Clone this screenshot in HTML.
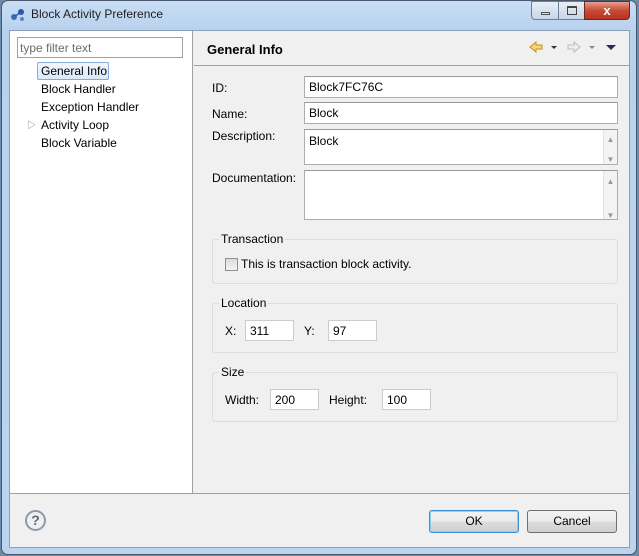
<!DOCTYPE html>
<html><head><meta charset="utf-8"><style>
*{margin:0;padding:0;box-sizing:border-box}
body{width:639px;height:556px;overflow:hidden;background:#6d8aa8;font-family:"Liberation Sans","Noto Sans CJK KR",sans-serif;font-size:12px;color:#000;position:relative}
.a{position:absolute}
#win{left:1px;top:0;width:636px;height:555px;border:1px solid #4a5a6e;border-radius:7px;background:linear-gradient(#c9def5,#b8d1ee 30px,#bcd4ef);}
#inner{left:9px;top:30px;width:621px;height:518px;background:#f0f0f0;border:1px solid #8aa0b8}
.txt{background:#fff;border:1px solid #abadb3;border-top-color:#999;padding:2px 4px;height:22px;line-height:16px}
.grp{border:1px solid #dcdcdc;border-radius:3px}
.lg{background:#f0f0f0;padding:0 2px}
.btn{border:1px solid #707070;border-radius:3px;background:linear-gradient(#f2f2f2,#ebebeb 50%,#dddddd 50%,#cfcfcf);text-align:center;line-height:20px}
.sb{width:14px;background:#f3f3f3;border-left:1px solid #e3e3e3;color:#999;font-size:8px;text-align:center}
</style></head><body>
<div id="win" class="a"></div>
<svg class="a" style="left:10px;top:7px" width="16" height="16"><circle cx="4" cy="10" r="3" fill="#3b6db0"/><circle cx="11" cy="5" r="3" fill="#2a5aa0"/><circle cx="12" cy="12" r="2" fill="#5a86c0"/><path d="M5 9 L10 6" stroke="#2a5aa0" stroke-width="1.5"/></svg>
<div class="a" style="left:31px;top:7px;font-size:12px;color:#1e1e1e">Block Activity Preference</div>
<div class="a" style="left:531px;top:1px;width:28px;height:19px;border:1px solid #6c7f96;border-radius:0 0 0 4px;background:linear-gradient(#e8eef6,#c8d6e8)"><div class="a" style="left:9px;top:10px;width:9px;height:3px;border:1px solid #555"></div></div>
<div class="a" style="left:558px;top:1px;width:27px;height:19px;border:1px solid #6c7f96;background:linear-gradient(#e8eef6,#c8d6e8)"><div class="a" style="left:8px;top:4px;width:10px;height:9px;border:1px solid #444;border-top-width:2px"></div></div>
<div class="a" style="left:584px;top:1px;width:46px;height:19px;border:1px solid #6a2a22;border-radius:0 0 4px 0;background:linear-gradient(#e8a090,#c84a35 50%,#b83420);color:#fff;font-weight:bold;text-align:center;line-height:17px;font-size:13px">x</div>
<div id="inner" class="a">
 <div class="a" style="left:0;top:0;width:183px;height:462px;background:#fff;border-right:1px solid #a0a0a0"></div>
 <div class="a" style="left:184px;top:34px;width:435px;height:1px;background:#a0a0a0"></div>
 <div class="a" style="left:0;top:462px;width:619px;height:1px;background:#a0a0a0"></div>
</div>
<div class="a txt" style="left:17px;top:37px;width:166px;height:21px;color:#6d6d6d;padding:2px 2px;border-color:#a0a0a0">type filter text</div>
<div class="a" style="left:37px;top:62px;width:72px;height:18px;border:1px solid #84acdd;border-radius:2px;background:linear-gradient(#f2f7fd,#dbe9f9)"></div>
<div class="a" style="left:41px;top:63px;line-height:16px">General Info</div>
<div class="a" style="left:41px;top:81px;line-height:16px">Block Handler</div>
<div class="a" style="left:41px;top:99px;line-height:16px">Exception Handler</div>
<div class="a" style="left:27px;top:117px;line-height:16px;color:#888;font-size:9px">▷</div>
<div class="a" style="left:41px;top:117px;line-height:16px">Activity Loop</div>
<div class="a" style="left:41px;top:135px;line-height:16px">Block Variable</div>
<div class="a" style="left:207px;top:42px;font-weight:bold;font-size:13px">General Info</div>
<svg class="a" style="left:528px;top:40px" width="92" height="14"><path d="M2 7 L8 2 L8 5 L14 5 L14 9 L8 9 L8 12 Z" fill="#f7d870" stroke="#c09020"/><path d="M23 6 h6 l-3 3z" fill="#333"/><path d="M52 7 L46 2 L46 5 L40 5 L40 9 L46 9 L46 12 Z" fill="#eee" stroke="#bbb"/><path d="M61 6 h6 l-3 3z" fill="#888"/><path d="M78 5 h10 l-5 5z" fill="#2a2a5a"/></svg>
<div class="a" style="left:212px;top:81px">ID:</div>
<div class="a txt" style="left:304px;top:76px;width:314px">Block7FC76C</div>
<div class="a" style="left:212px;top:107px">Name:</div>
<div class="a txt" style="left:304px;top:102px;width:314px">Block</div>
<div class="a" style="left:212px;top:129px">Description:</div>
<div class="a txt" style="left:304px;top:129px;width:314px;height:36px;padding:0">
 <div class="a" style="left:4px;top:3px">Block</div>
 <div class="a sb" style="right:0;top:0;height:34px"><div style="margin-top:2px">▲</div><div style="margin-top:4px">▼</div></div></div>
<div class="a" style="left:212px;top:171px">Documentation:</div>
<div class="a txt" style="left:304px;top:170px;width:314px;height:50px;padding:0">
 <div class="a sb" style="right:0;top:0;height:48px"><div style="margin-top:3px">▲</div><div style="margin-top:18px">▼</div></div></div>
<div class="a grp" style="left:212px;top:239px;width:406px;height:45px"></div>
<div class="a lg" style="left:219px;top:232px">Transaction</div>
<div class="a" style="left:225px;top:258px;width:13px;height:13px;border:1px solid #8f8f8f;background:linear-gradient(#dcdcdc,#f4f4f4)"></div>
<div class="a" style="left:241px;top:257px">This is transaction block activity.</div>
<div class="a grp" style="left:212px;top:303px;width:406px;height:50px"></div>
<div class="a lg" style="left:219px;top:296px">Location</div>
<div class="a" style="left:225px;top:324px">X:</div>
<div class="a txt" style="left:245px;top:320px;width:49px;height:21px;border-color:#ccc">311</div>
<div class="a" style="left:304px;top:324px">Y:</div>
<div class="a txt" style="left:328px;top:320px;width:49px;height:21px;border-color:#ccc">97</div>
<div class="a grp" style="left:212px;top:372px;width:406px;height:50px"></div>
<div class="a lg" style="left:219px;top:365px">Size</div>
<div class="a" style="left:225px;top:393px">Width:</div>
<div class="a txt" style="left:270px;top:389px;width:49px;height:21px;border-color:#ccc">200</div>
<div class="a" style="left:329px;top:393px">Height:</div>
<div class="a txt" style="left:382px;top:389px;width:49px;height:21px;border-color:#ccc">100</div>
<div class="a" style="left:25px;top:510px;width:21px;height:21px;border:2px solid #8a98b0;border-radius:50%;text-align:center;line-height:17px;font-weight:bold;color:#5a6a86;font-size:14px">?</div>
<div class="a btn" style="left:429px;top:510px;width:90px;height:23px;border-color:#3c8fd0;box-shadow:inset 0 0 0 1px #8ad0f5">OK</div>
<div class="a btn" style="left:527px;top:510px;width:90px;height:23px">Cancel</div>
</body></html>
